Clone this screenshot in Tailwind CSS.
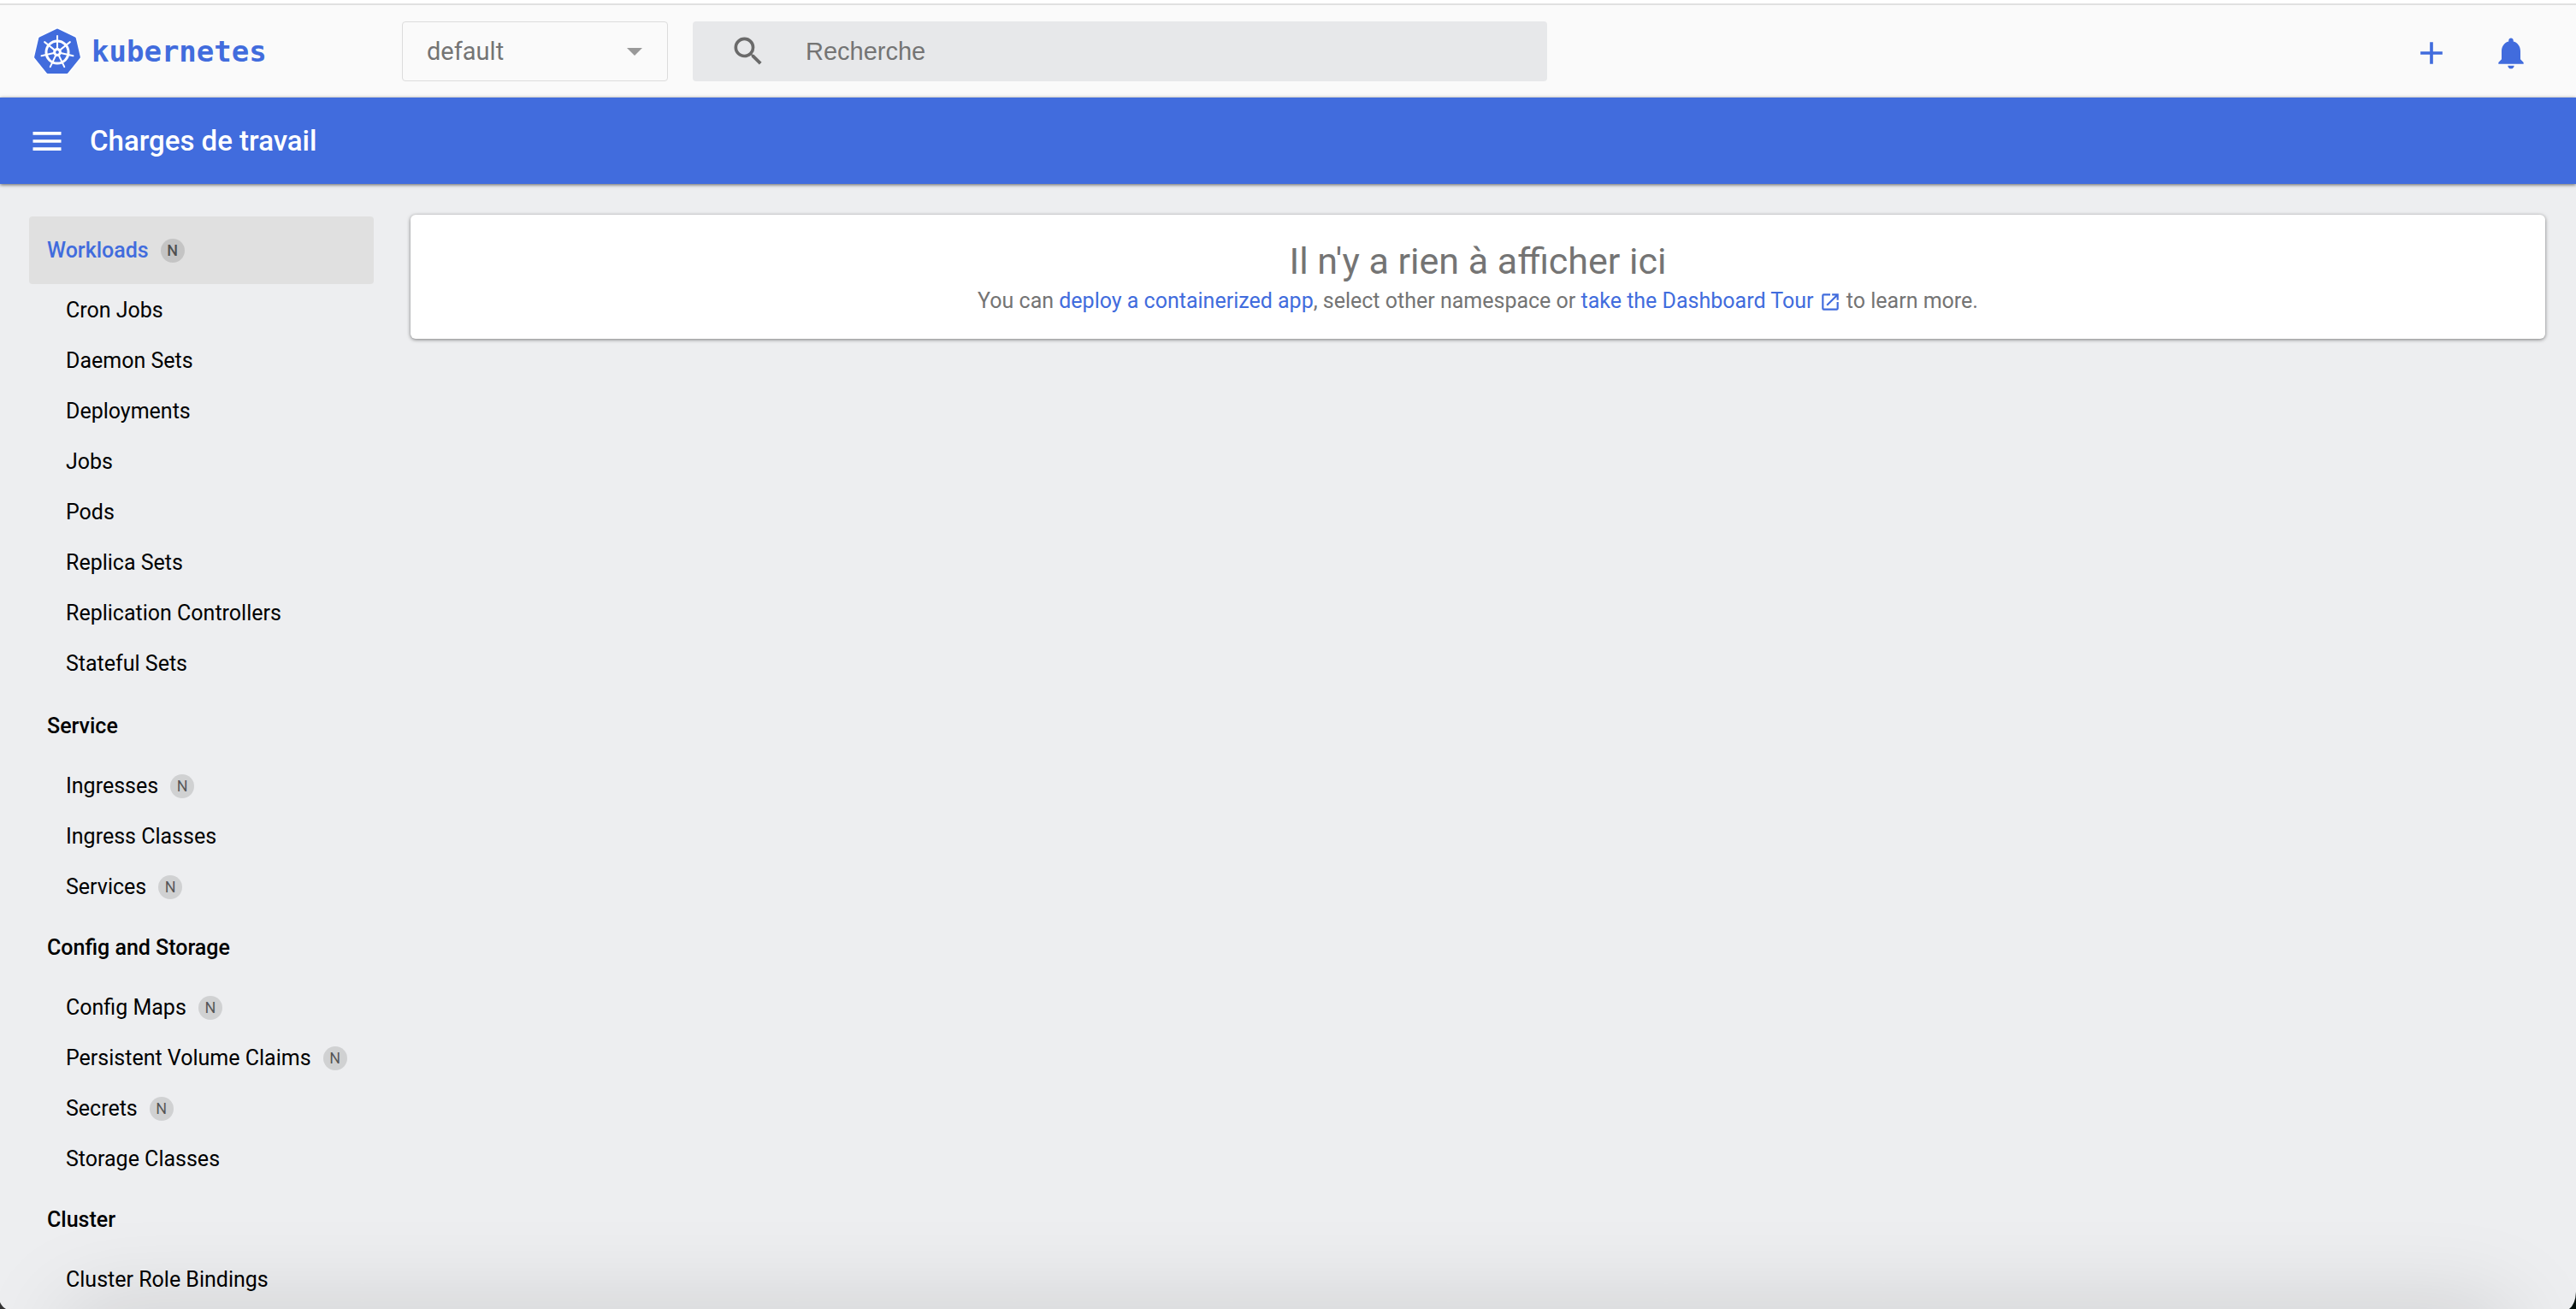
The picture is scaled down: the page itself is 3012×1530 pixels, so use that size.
<!DOCTYPE html>
<html lang="fr">
<head>
<meta charset="utf-8">
<title>Kubernetes Dashboard</title>
<script src="https://cdn.jsdelivr.net/npm/@tailwindcss/browser@4"></script>
</head>
<body class="flex h-screen flex-col overflow-hidden bg-[#edeef0] font-[Roboto,sans-serif] text-[25px] leading-8 text-black">

<header class="flex h-[114px] shrink-0 items-center border-t-4 border-white bg-[#fafafa]">
  <div class="flex h-full w-full items-center border-t-2 border-[#e0e0e0] pr-[54px] pl-[38px]">
    <a href="#" class="flex w-[432px] shrink-0 items-center gap-[11px] text-[#416cdd]">
      <svg class="size-[58px]" viewBox="-29 -30 58 58" aria-hidden="true">
        <path d="M0-26 20.3-16.2 25.4 5.8 11.3 23.4H-11.3L-25.4 5.8-20.3-16.2Z" fill="#fff" stroke="#fff" stroke-width="6" stroke-linejoin="round"/>
        <path d="M0-26 20.3-16.2 25.4 5.8 11.3 23.4H-11.3L-25.4 5.8-20.3-16.2Z" fill="#416cdd" stroke="#416cdd" stroke-width="3" stroke-linejoin="round"/>
        <g stroke="#fff" fill="none" stroke-linecap="round">
          <circle r="13" stroke-width="3"/>
          <g stroke-width="2">
            <path d="M0-3V-19"/>
            <path d="M0-3V-19" transform="rotate(51.43)"/>
            <path d="M0-3V-19" transform="rotate(102.86)"/>
            <path d="M0-3V-19" transform="rotate(154.29)"/>
            <path d="M0-3V-19" transform="rotate(205.71)"/>
            <path d="M0-3V-19" transform="rotate(257.14)"/>
            <path d="M0-3V-19" transform="rotate(308.57)"/>
          </g>
          <circle r="3.4" stroke-width="3"/>
        </g>
      </svg>
      <span class="font-['DejaVu_Sans_Mono',monospace] text-[34px] font-bold">kubernetes</span>
    </a>

    <div class="relative h-[70px] w-[311px] shrink-0">
      <select aria-label="Namespace" class="h-full w-full appearance-none rounded border border-[#dcdcdc] bg-transparent px-[28px] text-[29px] text-[#747474]">
        <option>default</option>
      </select>
      <svg class="pointer-events-none absolute top-[31px] right-[30px] h-[9px] w-[18px] fill-[#999]" viewBox="0 0 18 9" aria-hidden="true"><path d="M0 0H18L9 9Z"/></svg>
    </div>

    <label class="ml-[29px] flex h-[70px] w-[999px] items-center rounded bg-[#e7e8ea] pl-[43px]">
      <svg class="size-11 shrink-0 fill-[#6a6a6a]" viewBox="0 0 24 24" aria-hidden="true"><path d="M15.5 14h-.79l-.28-.27A6.471 6.471 0 0 0 16 9.5 6.5 6.5 0 1 0 9.5 16c1.61 0 3.09-.59 4.23-1.57l.27.28v.79l5 4.99L20.49 19l-4.99-5zm-6 0C7.01 14 5 11.99 5 9.5S7.01 5 9.5 5 14 7.01 14 9.5 11.99 14 9.5 14z"/></svg>
      <input type="search" aria-label="Recherche" placeholder="Recherche" class="ml-[45px] h-full flex-1 bg-transparent font-['Liberation_Sans',sans-serif] text-[29px] outline-none placeholder:text-[#747474]">
    </label>

    <div class="ml-auto flex items-center gap-[49px] pt-[3px] text-[#416cdd]">
      <button type="button" aria-label="Créer"><svg class="size-11 fill-current" viewBox="0 0 24 24"><path d="M19 13h-6v6h-2v-6H5v-2h6V5h2v6h6v2z"/></svg></button>
      <button type="button" aria-label="Notifications"><svg class="size-11 fill-current" viewBox="0 0 24 24"><path d="M12 22c1.1 0 2-.9 2-2h-4c0 1.1.89 2 2 2zm6-6v-5c0-3.07-1.64-5.64-4.5-6.32V4c0-.83-.67-1.5-1.5-1.5s-1.5.67-1.5 1.5v.68C7.63 5.36 6 7.92 6 11v5l-2 2v1h16v-1l-2-2z"/></svg></button>
    </div>
  </div>
</header>

<div class="z-10 flex h-[101px] shrink-0 items-center gap-7 bg-[#416cdd] pl-[33px] text-white shadow-[0_1px_4px_rgba(0,0,0,0.6)]">
  <button type="button" aria-label="Menu"><svg class="size-11 fill-current" viewBox="0 0 24 24"><path d="M3 18h18v-2H3v2zm0-5h18v-2H3v2zm0-7v2h18V6H3z"/></svg></button>
  <h1 class="text-[33px] font-medium">Charges de travail</h1>
</div>

<div class="flex min-h-0 flex-1 overflow-hidden">
  <nav class="w-[437px] shrink-0 pt-[38px] pl-[34px]" aria-label="Navigation">
    <a href="#" class="mb-px flex h-[79px] items-center gap-[14px] rounded bg-[#e0e0e0] pl-[21px] font-medium text-[#416cdd]">Workloads <span class="flex size-7 items-center justify-center rounded-full bg-black/12 text-lg text-black/60">N</span></a>
    <ul class="pb-0.5 pl-[43px]">
      <li><a href="#" class="flex h-[59px] items-center">Cron Jobs</a></li>
      <li><a href="#" class="flex h-[59px] items-center">Daemon Sets</a></li>
      <li><a href="#" class="flex h-[59px] items-center">Deployments</a></li>
      <li><a href="#" class="flex h-[59px] items-center">Jobs</a></li>
      <li><a href="#" class="flex h-[59px] items-center">Pods</a></li>
      <li><a href="#" class="flex h-[59px] items-center">Replica Sets</a></li>
      <li><a href="#" class="flex h-[59px] items-center">Replication Controllers</a></li>
      <li><a href="#" class="flex h-[59px] items-center">Stateful Sets</a></li>
    </ul>
    <a href="#" class="mt-0.5 mb-px flex h-[79px] items-center pl-[21px] font-medium">Service</a>
    <ul class="pl-[43px]">
      <li><a href="#" class="flex h-[59px] items-center gap-[14px]">Ingresses <span class="flex size-7 items-center justify-center rounded-full bg-black/12 text-lg text-black/60">N</span></a></li>
      <li><a href="#" class="flex h-[59px] items-center">Ingress Classes</a></li>
      <li><a href="#" class="flex h-[59px] items-center gap-[14px]">Services <span class="flex size-7 items-center justify-center rounded-full bg-black/12 text-lg text-black/60">N</span></a></li>
    </ul>
    <a href="#" class="mt-0.5 mb-px flex h-[79px] items-center pl-[21px] font-medium">Config and Storage</a>
    <ul class="pl-[43px]">
      <li><a href="#" class="flex h-[59px] items-center gap-[14px]">Config Maps <span class="flex size-7 items-center justify-center rounded-full bg-black/12 text-lg text-black/60">N</span></a></li>
      <li><a href="#" class="flex h-[59px] items-center gap-[14px] whitespace-nowrap">Persistent Volume Claims <span class="flex size-7 items-center justify-center rounded-full bg-black/12 text-lg text-black/60">N</span></a></li>
      <li><a href="#" class="flex h-[59px] items-center gap-[14px]">Secrets <span class="flex size-7 items-center justify-center rounded-full bg-black/12 text-lg text-black/60">N</span></a></li>
      <li><a href="#" class="flex h-[59px] items-center">Storage Classes</a></li>
    </ul>
    <a href="#" class="mt-0.5 mb-px flex h-[79px] items-center pl-[21px] font-medium">Cluster</a>
    <ul class="pl-[43px]">
      <li><a href="#" class="flex h-[59px] items-center">Cluster Role Bindings</a></li>
    </ul>
  </nav>

  <main class="flex-1 pt-9 pr-9 pl-[43px]">
    <section class="flex h-[145px] flex-col items-center rounded-md bg-white pt-[26px] text-[#747474] shadow-[0_1px_4px_rgba(0,0,0,0.5)]">
      <h2 class="text-[43px] leading-[56px]">Il n'y a rien à afficher ici</h2>
      <p class="leading-[38px]">You can <a href="#" class="text-[#416cdd]">deploy a containerized app</a>, select other namespace or <a href="#" class="text-[#416cdd]">take the Dashboard Tour <svg class="inline-block size-[26px] fill-current align-[-6px]" viewBox="0 0 24 24" aria-hidden="true"><path d="M19 19H5V5h7V3H5a2 2 0 0 0-2 2v14a2 2 0 0 0 2 2h14c1.1 0 2-.9 2-2v-7h-2v7zM14 3v2h3.59l-9.83 9.83 1.41 1.41L19 6.41V10h2V3h-7z"/></svg></a> to learn more.</p>
    </section>
  </main>
</div>

<!-- window edge: soft shade and dark rounded corners along the bottom -->
<div class="pointer-events-none fixed inset-x-20 top-full h-24 shadow-[0_0_110px_rgba(0,0,0,0.15)]"></div>
<svg class="pointer-events-none fixed bottom-0 left-0 size-2" viewBox="0 0 8 8" aria-hidden="true"><path d="M0 0Q2 5 7 8H0Z" fill="#333"/></svg>
<svg class="pointer-events-none fixed right-0 bottom-0 h-5 w-2" viewBox="0 0 8 20" aria-hidden="true"><path d="M8 0Q7.500 14 0 20H8Z" fill="#04100c"/></svg>
</body>
</html>
